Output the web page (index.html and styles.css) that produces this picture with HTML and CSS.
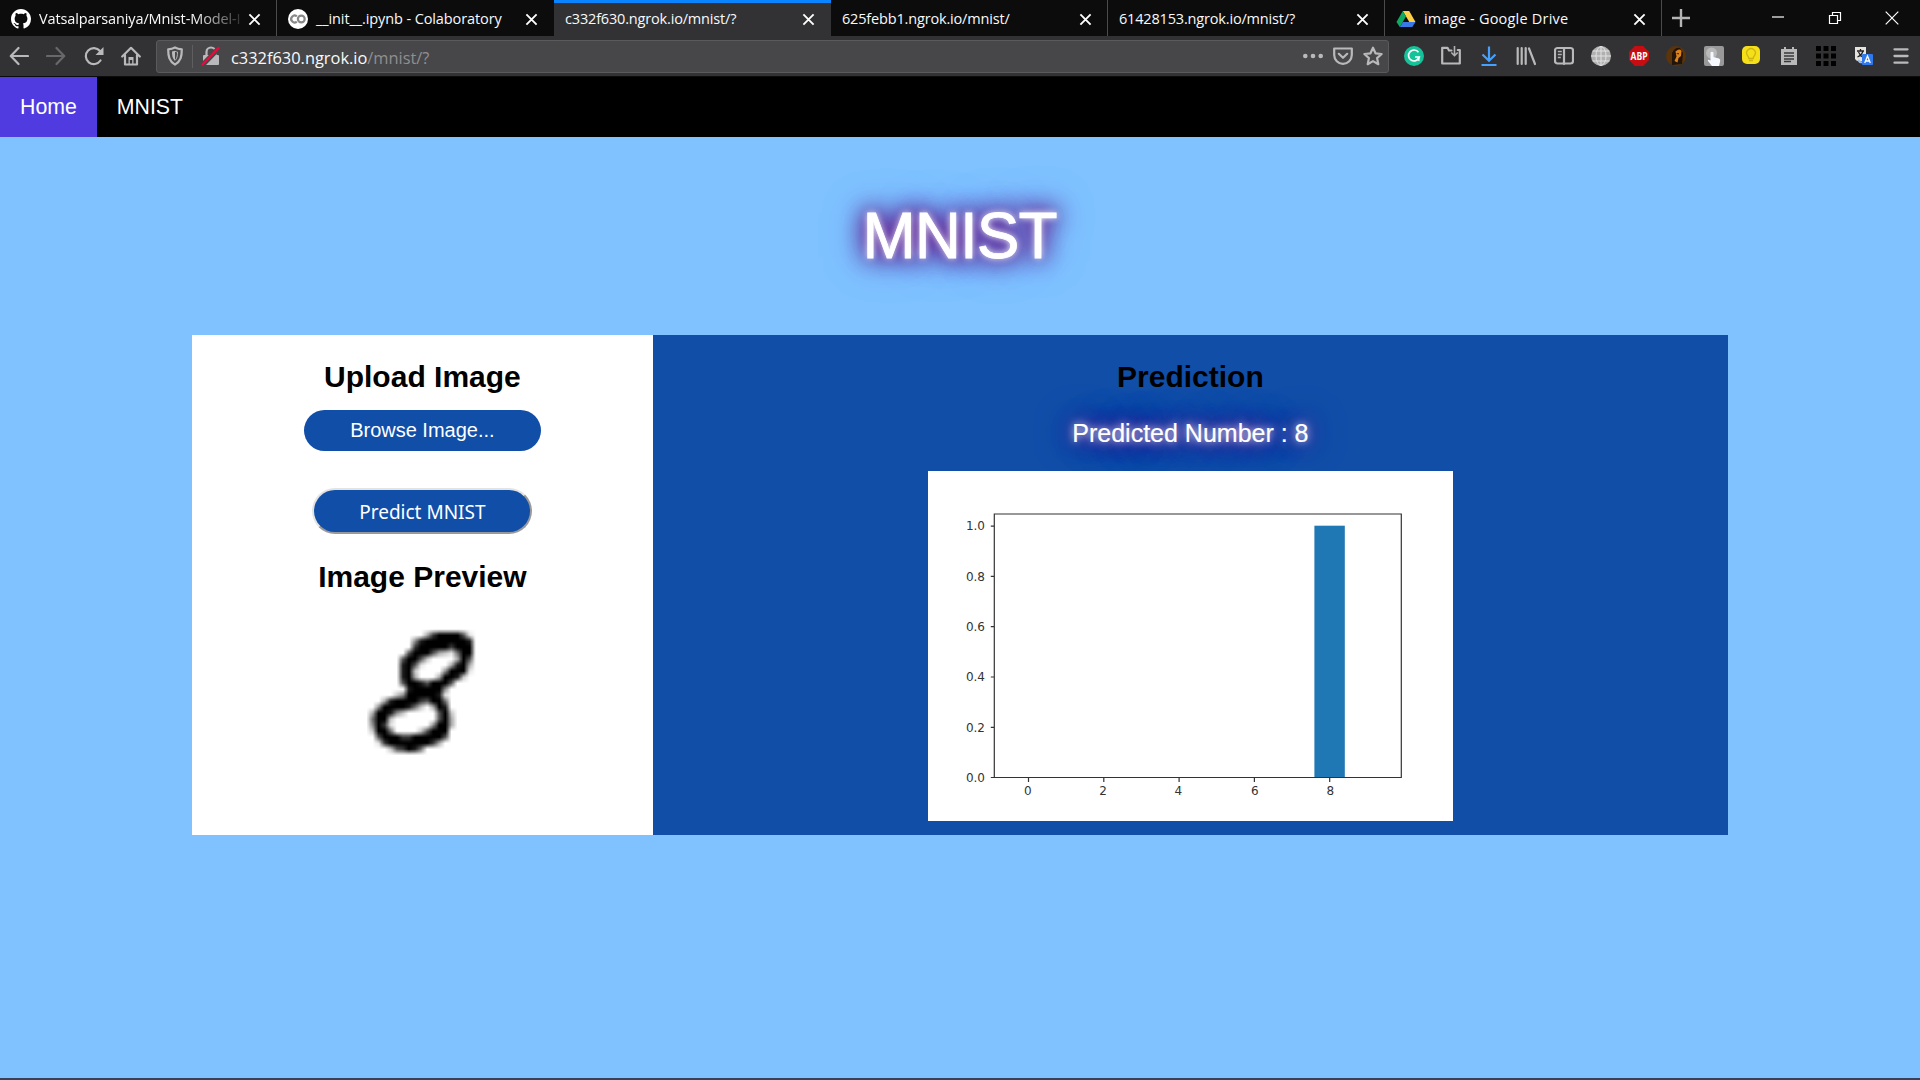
FILE: index.html
```html
<!DOCTYPE html>
<html lang="en">
<head>
<meta charset="utf-8">
<title>MNIST</title>
<link rel="stylesheet" href="styles.css">
</head>
<body>
<svg class="defs" width="0" height="0">
  <symbol id="x" viewBox="0 0 14 14"><path d="M1.5 1.5l11 11M12.5 1.5l-11 11" stroke="#fff" stroke-width="2" fill="none"/></symbol>
</svg>
<header class="browser">
  <div class="tabs">
    <div class="tab">
      <svg class="favicon" viewBox="0 0 16 16"><path fill="#fff" d="M8 0C3.58 0 0 3.58 0 8c0 3.54 2.29 6.53 5.47 7.59.4.07.55-.17.55-.38 0-.19-.01-.82-.01-1.49-2.01.37-2.53-.49-2.69-.94-.09-.23-.48-.94-.82-1.13-.28-.15-.68-.52-.01-.53.63-.01 1.08.58 1.23.82.72 1.21 1.87.87 2.33.66.07-.52.28-.87.51-1.07-1.78-.2-3.64-.89-3.64-3.95 0-.87.31-1.59.82-2.15-.08-.2-.36-1.02.08-2.12 0 0 .67-.21 2.2.82.64-.18 1.32-.27 2-.27s1.36.09 2 .27c1.53-1.04 2.2-.82 2.2-.82.44 1.1.16 1.92.08 2.12.51.56.82 1.27.82 2.15 0 3.07-1.87 3.75-3.65 3.95.29.25.54.73.54 1.48 0 1.07-.01 1.93-.01 2.2 0 .21.15.46.55.38A8.01 8.01 0 0016 8c0-4.42-3.58-8-8-8z"/></svg>
      <span class="label fade">Vatsalparsaniya/Mnist-Model-I</span>
      <svg class="close"><use href="#x"/></svg>
    </div>
    <div class="tab">
      <svg class="favicon" viewBox="0 0 20 20"><circle cx="10" cy="10" r="10" fill="#fff"/><g fill="none" stroke="#888" stroke-width="2.2"><path d="M8.800 7.400a3.400 3.400 0 1 0 0 5.200"/><circle cx="13.300" cy="10" r="3.400"/></g></svg>
      <span class="label medium">__init__.ipynb - Colaboratory</span>
      <svg class="close"><use href="#x"/></svg>
    </div>
    <div class="tab active">
      <span class="label">c332f630.ngrok.io/mnist/?</span>
      <svg class="close"><use href="#x"/></svg>
    </div>
    <div class="tab">
      <span class="label">625febb1.ngrok.io/mnist/</span>
      <svg class="close"><use href="#x"/></svg>
    </div>
    <div class="tab">
      <span class="label">61428153.ngrok.io/mnist/?</span>
      <svg class="close"><use href="#x"/></svg>
    </div>
    <div class="tab">
      <svg class="favicon" viewBox="0 0 20 20"><path fill="#ffcf48" d="M6.8 2h6.4l6.3 11h-6.2z"/><path fill="#11a861" d="M6.8 2l3.2 5.5L3.8 18 .5 13z"/><path fill="#3b78e7" d="M6.9 13h12.6l-3.2 5H3.8z"/></svg>
      <span class="label wide">image - Google Drive</span>
      <svg class="close"><use href="#x"/></svg>
    </div>
    <svg class="newtab" viewBox="0 0 18 18"><path d="M9 0v18M0 9h18" stroke="#b5b5b5" stroke-width="2.4"/></svg>
    <div class="window-buttons">
      <svg viewBox="0 0 14 14"><path d="M1 6h12" stroke="#fff" stroke-width="1.2"/></svg>
      <svg viewBox="0 0 14 14"><path d="M1.5 4.500h8v8h-8zM4.500 4.500v-3h8v8h-3" fill="none" stroke="#fff" stroke-width="1.2"/></svg>
      <svg viewBox="0 0 14 14"><path d="M.7.7l12.600 12.600M13.300.7L.7 13.300" stroke="#fff" stroke-width="1.2"/></svg>
    </div>
  </div>
  <div class="toolbar">
    <div class="nav-icons">
      <svg viewBox="0 0 20 20"><path class="ln" d="M19 10H2M9.500 2L1.800 10l7.700 8"/></svg>
      <svg class="dim" viewBox="0 0 20 20"><path class="ln" d="M1 10h17M10.500 2l7.700 8-7.700 8"/></svg>
      <svg viewBox="0 0 20 20"><path class="ln" d="M16.500 14.500A8 8 0 1 1 16 5"/><path class="fl" d="M19.500 1v8h-8z"/></svg>
      <svg viewBox="0 0 20 20"><path class="ln" d="M1.200 10.500L10 1.800l8.800 8.700M4 9v9.500h12V9"/><path class="fl" d="M7.500 11h5v7.500h-1.300V14H8.800v4.500H7.500z"/></svg>
    </div>
    <div class="urlbar">
      <svg class="shield" viewBox="0 0 20 20"><path class="ln" d="M3.200 3.400C6 3 8 2.400 10 1.400c2 1 4 1.600 6.800 2 0 7-1 12-6.800 15.200C4.200 15.400 3.200 10.400 3.200 3.400z"/><path class="fl" d="M10 4.700v10C7.500 12.800 7 10 7 5.600z"/><path d="M10 5.300c1 .4 2 .6 2.500.7 0 4-.5 6.500-2.500 8.500" fill="none" stroke="#b1b1b3"/></svg>
      <i class="divider"></i>
      <svg class="lock" viewBox="0 0 20 20"><path d="M5.500 10V6a4.500 4.500 0 0 1 9 0v4" class="ln"/><path class="fl" d="M3 9h14a1 1 0 0 1 1 1v8a1 1 0 0 1-1 1H3a1 1 0 0 1-1-1v-8a1 1 0 0 1 1-1z"/><path d="M1 19.500L18.500 1.500" stroke="#474749" stroke-width="5"/><path d="M1.500 18.500L17.500 2" stroke="#ff0039" stroke-width="2.300" stroke-linecap="round"/></svg>
      <span class="url">c332f630.ngrok.io<span>/mnist/?</span></span>
      <svg viewBox="0 0 20 20"><g class="fl"><circle cx="2.300" cy="10" r="2.300"/><circle cx="10" cy="10" r="2.300"/><circle cx="17.700" cy="10" r="2.300"/></g></svg>
      <svg viewBox="0 0 20 20"><path class="ln" d="M1.200 2.500h17.600V9a8.800 8.800 0 0 1-17.600 0z"/><path class="ln" d="M5.800 7.800l4.200 4 4.200-4"/></svg>
      <svg viewBox="0 0 20 20"><path class="ln" d="M10 1.700l2.500 5.600 6.100.7-4.500 4.100 1.200 6.100-5.300-3.100-5.300 3.100 1.200-6.100L1.400 8l6.100-.7z"/></svg>
    </div>
    <div class="extensions">
      <svg viewBox="0 0 20 20"><circle cx="10" cy="10" r="10" fill="#15c39a"/><path d="M14.500 6.300A5.500 5.500 0 1 0 15.300 11H11" fill="none" stroke="#fff" stroke-width="1.700"/><path d="M15.500 10.500v4.700l-3.500-1.800" fill="#fff"/></svg>
      <svg viewBox="0 0 20 20"><path class="ln" d="M10.500 4.500H8l-1.500-2.700H1.200V17.500h17.600V4h-2"/><path d="M13.500 0v9M10.300 6.500l3.200 3.200 3.200-3.200" stroke="#b1b1b3" stroke-width="1.600" fill="none"/></svg>
      <svg viewBox="0 0 20 20"><path d="M10 .5v14M3.500 8.500l6.500 6.300 6.500-6.300M2.500 19h15" fill="none" stroke="#45a1ff" stroke-width="2.200"/></svg>
      <svg viewBox="0 0 20 20"><path class="ln" d="M1.700 2v16M5.700 2v16M9.700 2v16M13 2.500l6 15.500"/></svg>
      <svg viewBox="0 0 20 20"><rect class="ln" x="1" y="2" width="18" height="15.500" rx="2.500"/><path class="ln" d="M10 2v16"/><path d="M3.800 5.500h4M3.800 8.500h4M3.800 11.500h3" stroke="#b1b1b3" stroke-width="1.400"/></svg>
      <svg viewBox="0 0 20 20"><circle cx="10" cy="10" r="10" fill="#b0b0b0"/><g fill="none" stroke="#e2e2e2" stroke-width="1"><ellipse cx="10" cy="10" rx="5" ry="9.500"/><path d="M10 0v20M0 10h20M1.500 5h17M1.500 15h17"/></g></svg>
      <svg viewBox="0 0 20 20"><path fill="#c70d12" d="M5.900 0h8.200L20 5.900v8.200L14.100 20H5.900L0 14.100V5.900z"/><text x="10" y="13.800" text-anchor="middle" class="abp" textLength="17" lengthAdjust="spacingAndGlyphs">ABP</text></svg>
      <svg viewBox="0 0 20 20"><circle cx="10" cy="10" r="10" fill="#5b3509"/><path fill="#21140c" d="M6 19V7q3-6 8-5l3 5-1 11z"/><path fill="#dc821b" d="M9.500 5.500q4-3.500 6-.5l-.5 5-2.500 2-1 4.500-3-1.500 2-4.500z"/><path fill="#2a170c" d="M10 7.500l3-.5-.5 1.500z"/></svg>
      <svg viewBox="0 0 20 20"><rect width="20" height="20" rx="2" fill="#999"/><circle cx="7.500" cy="7" r="5.500" fill="#b9b9b9"/><path fill="#f5f8ff" d="M6.500 6.500q1.500-1.500 3 0V11l5.500 1.500q1.500.5 1.200 2.500L15 20H8l-4-5q-1-2 2.500-.5z"/></svg>
      <svg viewBox="0 0 20 20"><rect x="1" y="0" width="18" height="18" rx="5" fill="#f5df19"/><path d="M7.800 12.500q0-1.500-1.300-3a4.300 4.300 0 1 1 7 0q-1.300 1.500-1.300 3zM8 14.500h4" fill="none" stroke="#cdb414" stroke-width="1.300"/></svg>
      <svg viewBox="0 0 20 20"><path fill="#b9b9b9" d="M2 3h3V1h2v2h6V1h2v2h3v16H2z"/><path d="M5 7h10M5 10h10M5 13h10M5 15.500h7" stroke="#38383d" stroke-width="1.300"/></svg>
      <svg viewBox="0 0 20 20"><path fill="#000" d="M0 0h5v5H0zM7.500 0h5v5h-5zM15 0h5v5h-5zM0 7.500h5v5H0zM7.500 7.500h5v5h-5zM15 7.500h5v5h-5zM0 15h5v5H0zM7.500 15h5v5h-5zM15 15h5v5h-5z"/></svg>
      <svg viewBox="0 0 20 20"><path fill="#e5e3dc" d="M1 1h11v14H3l-2-2z"/><path d="M3 5h7M6.500 3v2M9 5q-1 4-5.500 6M4.500 6q2 4 4 5" fill="none" stroke="#222" stroke-width="1.300"/><path d="M4 14q2 3 4 2" fill="none" stroke="#9bbce8" stroke-width="2"/><rect x="8" y="8" width="11" height="11" rx="1" fill="#3079ed"/><path d="M10.700 17l2.800-7 2.800 7M11.500 15h4" fill="none" stroke="#fff" stroke-width="1.300"/></svg>
      <svg viewBox="0 0 20 20"><path d="M3.500 3.300h13M3.500 10h13M3.500 16.700h13" stroke="#b9b9bb" stroke-width="2.300" stroke-linecap="round"/></svg>
    </div>
  </div>
</header>
<nav class="site-nav"><a class="current">Home</a><a>MNIST</a></nav>
<main>
  <h1>MNIST</h1>
  <div class="panel">
    <section class="upload">
      <h2>Upload Image</h2>
      <label class="browse">Browse Image...</label>
      <button class="predict">Predict MNIST</button>
      <h2>Image Preview</h2>
      <canvas class="preview" id="preview" width="28" height="28"></canvas>
    </section>
    <section class="prediction">
      <h2>Prediction</h2>
      <p class="result">Predicted Number : 8</p>
      <svg class="chart" viewBox="0 0 525 350">
        <rect x="386.400" y="54.700" width="30.400" height="252" fill="#1f77b4"/>
        <path d="M66.300 43h407v263.500h-407zM62.800 306.500h3.500M62.800 256.300h3.500M62.800 206h3.500M62.800 155.700h3.500M62.800 105.400h3.500M62.800 55.100h3.500M100.500 306.500v4.500M175.800 306.500v4.500M251.100 306.500v4.500M326.400 306.500v4.500M401.700 306.500v4.500" fill="none" stroke="#333" stroke-width="1.200"/>
        <g text-anchor="end"><text x="57" y="59.200">1.0</text><text x="57" y="109.500">0.8</text><text x="57" y="159.800">0.6</text><text x="57" y="210.100">0.4</text><text x="57" y="260.700">0.2</text><text x="57" y="310.700">0.0</text></g>
        <g text-anchor="middle"><text x="99.700" y="324.200">0</text><text x="175" y="324.200">2</text><text x="250.300" y="324.200">4</text><text x="326.900" y="324.200">6</text><text x="402.200" y="324.200">8</text></g>
      </svg>
    </section>
  </div>
</main>
<footer class="taskbar"></footer>
<script src="script.js"></script>
</body>
</html>
```
FILE: styles.css
```css
* { box-sizing: border-box; }
body {
  margin: 0;
  height: 1080px;
  display: flex;
  flex-direction: column;
  overflow: hidden;
  background: #7fc2ff;
  font-family: "Liberation Sans", Arial, sans-serif;
}
svg { display: block; flex: none; }
.defs { position: absolute; }

.browser { height: 77px; background: #323234; border-bottom: 1px solid #0c0c0d; font-family: "Open Sans", "Noto Sans", sans-serif; }
.tabs { display: flex; height: 36px; background: #0c0c0d; align-items: center; }
.tab {
  display: flex;
  align-items: center;
  gap: 8px;
  width: 277px;
  height: 36px;
  padding: 2px 15px 0 11px;
  border-right: 1px solid #4b4b4c;
  color: #f9f9fa;
  font-size: 14.5px;
}
.tab:nth-child(2) { border-right-color: #0c0c0d; }
.tab.active { background: #323234; border-top: 3px solid #0a84ff; border-right: 0; padding: 0 16px 1px 11px; }
.favicon { width: 20px; height: 20px; }
.label { flex: 1; white-space: nowrap; letter-spacing: -0.17px; padding-bottom: 2px; }
.active .label { padding-bottom: 1px; }
.medium { letter-spacing: -0.1px; }
.wide { letter-spacing: 0.2px; }
.fade { letter-spacing: -0.12px; margin-right: -5px; mask-image: linear-gradient(90deg, #000 75%, transparent 102%); }
.close { width: 13px; height: 13px; }
.newtab { width: 18px; height: 18px; margin-left: 10px; }
.window-buttons { display: flex; gap: 43px; margin: 0 21px 0 auto; }
.window-buttons svg { width: 14px; height: 14px; }

.toolbar { display: flex; align-items: center; height: 40px; }
.toolbar svg { width: 20px; height: 20px; }
.ln { fill: none; stroke: #b9b9bb; stroke-width: 2.2; stroke-linejoin: round; stroke-linecap: round; }
.fl { fill: #b9b9bb; }
.dim { opacity: .4; }
.nav-icons { display: flex; gap: 17.5px; width: 156px; padding-left: 8.5px; }
.urlbar {
  display: flex;
  align-items: center;
  width: 1233px;
  height: 33px;
  padding: 0 5px 0 8px;
  gap: 10px;
  background: #474749;
  border: 1px solid #5a5a5c;
  border-radius: 3px;
}
.shield { margin-right: -3px; }
.divider { width: 1px; height: 23px; background: #5e5e60; margin-right: -2px; }
.url { flex: 1; color: #f9f9fa; font-size: 16.4px; padding-top: 2px; }
.url span { color: #8f8f91; }
.extensions { display: flex; flex: 1; padding-left: 6px; }
.extensions svg { flex: none; margin: 0 8.75px; }
.abp { font: bold 10px "Open Sans", sans-serif; fill: #fff; }

.site-nav { display: flex; height: 60px; background: #000; }
.site-nav a { padding: 0 20px; color: #fff; font-size: 21.3px; line-height: 61px; }
.site-nav .current { background: #4f3be0; }

main { flex: 1; }
h1 {
  margin: 0;
  height: 198px;
  padding-top: 62px;
  color: #fff;
  font-size: 64px;
  font-weight: 400;
  letter-spacing: -1px;
  line-height: 74px;
  text-align: center;
  text-indent: -1px;
  -webkit-text-stroke: .8px #fff;
  text-shadow: 0 0 7px #fff, 0 0 20px #6a1080, 0 0 24px #5a1890, 0 0 28px #5a1890, 0 0 42px #4f5fc0;
}
.panel { display: flex; width: 1536px; height: 500px; margin: 0 auto; }
.upload, .prediction { display: flex; flex-direction: column; align-items: center; }
.upload { width: 460.8px; background: #fff; }
.prediction { flex: 1; background: #104ea8; }
h2 { margin: 24px 0 0; font-size: 30px; line-height: 35px; }
.browse {
  width: 237px;
  height: 41px;
  margin-top: 16px;
  border-radius: 20.5px;
  background: #104ea8;
  color: #fff;
  font-size: 20px;
  line-height: 40px;
  text-align: center;
}
.predict {
  width: 220px;
  height: 46px;
  margin-top: 37px;
  padding: 2px 0 0;
  border: 2px solid;
  border-color: #e3e3e3 #999 #999 #e3e3e3;
  border-radius: 23px;
  background: #104ea8;
  color: #fff;
  font: 19px "Noto Sans", sans-serif;
}
.predict + h2 { margin-top: 25px; }
.preview { width: 170px; height: 168px; margin: 14px 0 0 3px; }
.result {
  margin: 24px 0 0;
  color: #fff;
  font-size: 25px;
  line-height: 30px;
  -webkit-text-stroke: .2px #fff;
  text-shadow: 0 0 8px #fff, 0 0 20px #8a1a9a, 0 0 24px #5a1890, 0 0 40px #1a2a9a;
}
.chart { width: 525px; height: 350px; margin-top: 23px; background: #fff; position: relative; }
.chart text { font: 12px "DejaVu Sans", sans-serif; fill: #333; }
.taskbar { height: 2px; background: #34435a; }
```
FILE: script.js
```javascript
// Ink levels of the handwritten digit: one string per pixel row, 0 = blank, 9 = full ink.
const rows = [
  "00000000037999961",
  "00000004899999998",
  "00000007999997999",
  "00000069996321599",
  "00000699620000396",
  "00000896100003893",
  "00000892000049991",
  "00000893000399820",
  "00000699869996000",
  "00000089999940000",
  "00002499999810000",
  "00389999769950000",
  "04999985203980000",
  "39984200000692000",
  "59920000000693000",
  "49710000004993000",
  "29950000269990000",
  "06999779999960000",
  "01799999997300000",
  "00026798500000000"
];
const ctx = document.getElementById("preview").getContext("2d");
ctx.fillStyle = "#fff";
ctx.fillRect(0, 0, 28, 28);
rows.forEach((row, y) => {
  [...row].forEach((level, x) => {
    ctx.fillStyle = `rgba(0, 0, 0, ${level / 9})`;
    ctx.fillRect(x + 5, y + 4, 1, 1);
  });
});
```
